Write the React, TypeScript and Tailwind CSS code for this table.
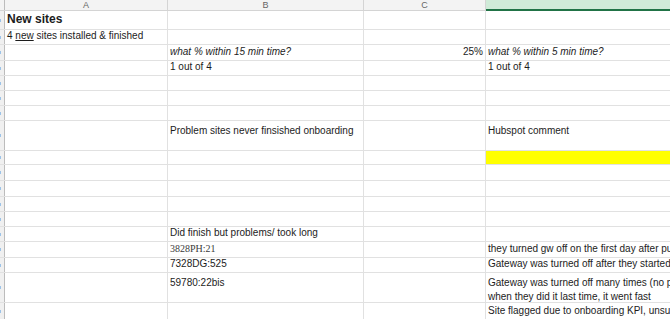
import React from 'react';

type Cell = {
  text?: React.ReactNode;
  italic?: boolean;
  align?: 'left' | 'right';
  serif?: boolean;
  top?: boolean;
};

type Row = {
  h: string;
  a?: Cell;
  b?: Cell;
  c?: Cell;
  d?: Cell;
  yellow?: boolean;
};

const rows: Row[] = [
  { h: 'h-[19px]', a: { text: <span className="text-[12px] font-bold leading-[18px]">New sites</span> } },
  { h: 'h-[15px]', a: { text: <>4 <span className="underline">new</span> sites installed &amp; finished</> } },
  {
    h: 'h-[16px]',
    b: { text: 'what % within 15 min time?', italic: true },
    c: { text: '25%', align: 'right' },
    d: { text: 'what % within 5 min time?', italic: true },
  },
  { h: 'h-[15px]', b: { text: '1 out of 4' }, d: { text: '1 out of 4' } },
  { h: 'h-[15px]' },
  { h: 'h-[15px]' },
  { h: 'h-[15px]' },
  {
    h: 'h-[30px]',
    b: { text: 'Problem sites never finsished onboarding', top: true },
    d: { text: 'Hubspot comment', top: true },
  },
  { h: 'h-[14px]', yellow: true },
  { h: 'h-[16px]' },
  { h: 'h-[16px]' },
  { h: 'h-[15px]' },
  { h: 'h-[15px]' },
  { h: 'h-[15px]', b: { text: 'Did finish but problems/ took long' } },
  {
    h: 'h-[16px]',
    b: { text: '3828PH:21', serif: true },
    d: { text: 'they turned gw off on the first day after putting it in' },
  },
  {
    h: 'h-[15px]',
    b: { text: '7328DG:525' },
    d: { text: 'Gateway was turned off after they started the onboarding' },
  },
  {
    h: 'h-[30px]',
    b: { text: '59780:22bis', top: true },
    d: {
      text: (
        <>
          <div>Gateway was turned off many times (no power</div>
          <div>when they did it last time, it went fast</div>
        </>
      ),
      top: true,
    },
  },
  {
    h: 'h-[17px]',
    d: { text: 'Site flagged due to onboarding KPI, unsure why' },
  },
];

const CellView = ({ cell, width, overflow }: { cell?: Cell; width: string; overflow?: boolean }) => (
  <div
    className={`${width} shrink-0 h-full border-r border-[#e1e1e1] flex px-[2px] whitespace-nowrap ${
      cell?.top ? 'items-start pt-[3px]' : 'items-end pb-[1px]'
    } ${cell?.align === 'right' ? 'justify-end' : 'justify-start'} ${overflow ? '' : 'overflow-hidden'}`}
  >
    {cell?.text && (
      <div
        className={`${cell.italic ? 'italic' : ''} ${
          cell.serif
            ? "font-['Liberation_Serif',serif] text-[10px] text-[#3a3a3a]"
            : 'text-[10px] text-[#1c1c1c]'
        } leading-[14px]`}
      >
        {cell.text}
      </div>
    )}
  </div>
);

export default function App() {
  return (
    <div className="w-[670px] h-[319px] overflow-hidden bg-white font-['Liberation_Sans',Arial,sans-serif] select-none">
      {/* column headers */}
      <div className="flex h-[11px] border-b border-[#d4d4d4] bg-[#f3f3f3]">
        <div className="w-[5px] shrink-0 border-r border-[#bcbcbc]" />
        {[
          ['A', 'w-[163px]'],
          ['B', 'w-[196px]'],
          ['C', 'w-[122px]'],
        ].map(([l, w]) => (
          <div
            key={l}
            className={`${w} shrink-0 border-r border-[#d4d4d4] flex items-end justify-center text-[9px] leading-[9px] text-[#666]`}
          >
            {l}
          </div>
        ))}
        <div className="flex-1 bg-[#d0ebd8] border-b-2 border-[#217346] -mb-[1px]" />
      </div>

      {rows.map((r, i) => (
        <div key={i} className={`flex ${r.h} border-b border-[#e1e1e1]`}>
          {/* row header sliver: only a trace of the row number shows */}
          <div className="w-[5px] shrink-0 h-full border-r border-[#bcbcbc] bg-[#f0f0f0] flex items-center justify-start">
            <div className="w-[1px] h-[3px] bg-[#9cc3e8]" />
          </div>
          <CellView cell={r.a} width="w-[163px]" overflow />
          <CellView cell={r.b} width="w-[196px]" overflow />
          <CellView cell={r.c} width="w-[122px]" />
          <div
            className={`flex-1 h-full flex px-[2px] whitespace-nowrap overflow-hidden ${
              r.d?.top ? 'items-start pt-[3px]' : 'items-end pb-[1px]'
            } ${r.yellow ? 'bg-[#ffff00]' : ''}`}
          >
            {r.d?.text && (
              <div className={`${r.d.italic ? 'italic' : ''} text-[10px] leading-[14px] text-[#1c1c1c]`}>{r.d.text}</div>
            )}
          </div>
        </div>
      ))}
    </div>
  );
}
